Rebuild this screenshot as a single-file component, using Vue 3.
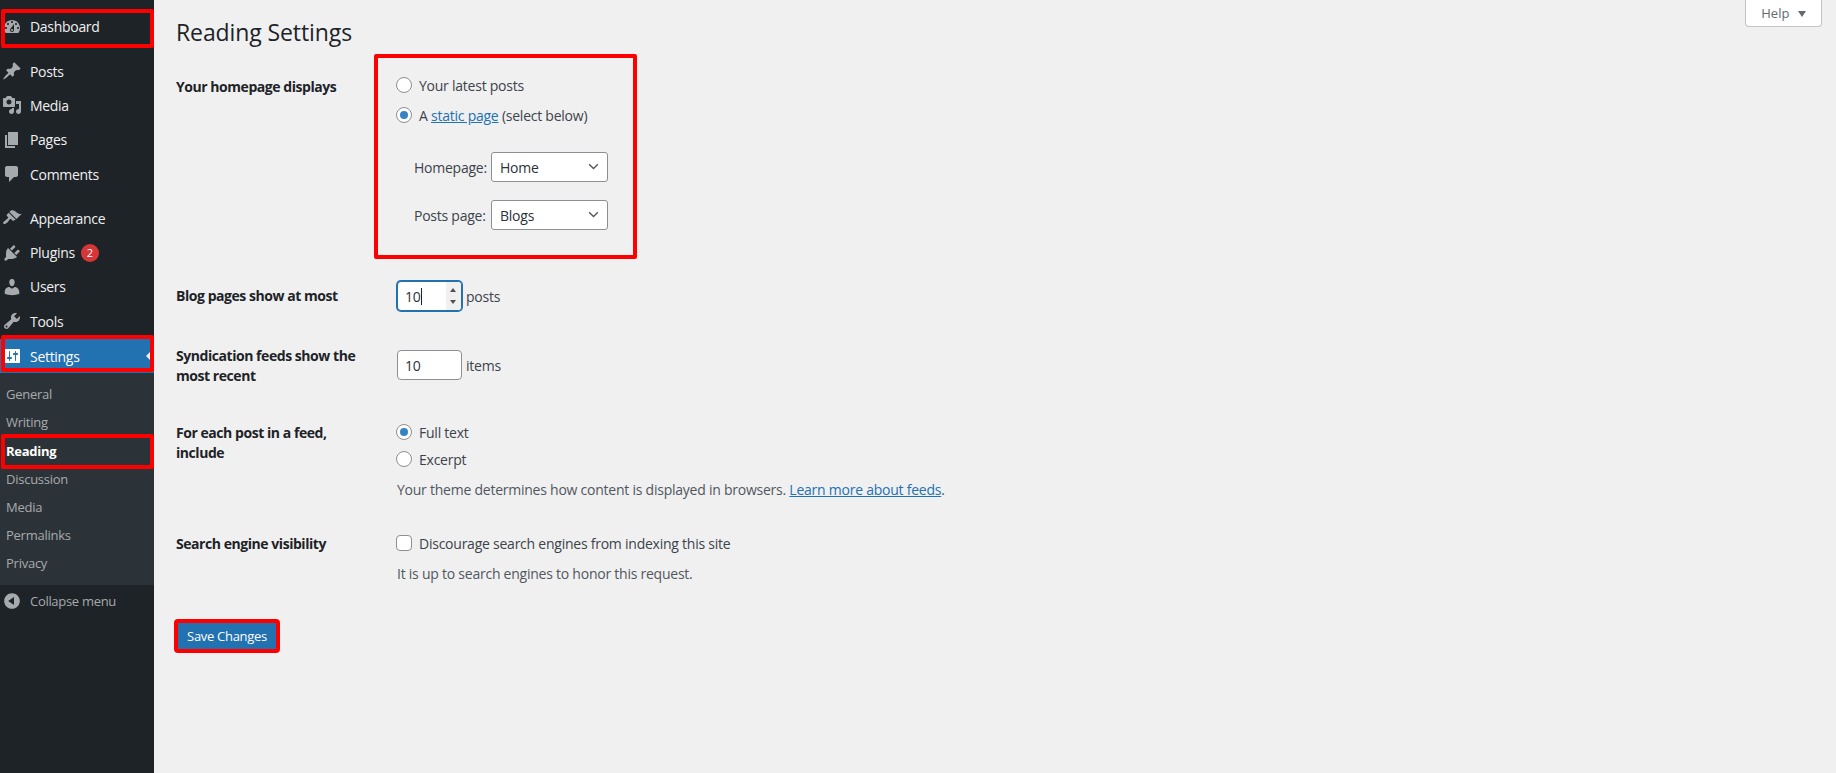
<script setup>
const icons = {
  dashboard: 'M3.76 16h12.48c1.1-1.37 1.76-3.11 1.76-5 0-4.42-3.58-8-8-8s-8 3.58-8 8c0 1.89.66 3.63 1.76 5zM10 4c.55 0 1 .45 1 1s-.45 1-1 1-1-.45-1-1 .45-1 1-1zM6 6c.55 0 1 .45 1 1s-.45 1-1 1-1-.45-1-1 .45-1 1-1zm8 0c.55 0 1 .45 1 1s-.45 1-1 1-1-.45-1-1 .45-1 1-1zm-5.37 5.55L12 7v6c0 1.1-.9 2-2 2s-2-.9-2-2c0-.57.24-1.08.63-1.45zM4 10c.55 0 1 .45 1 1s-.45 1-1 1-1-.45-1-1 .45-1 1-1zm12 0c.55 0 1 .45 1 1s-.45 1-1 1-1-.45-1-1 .45-1 1-1zm-5 3c0-.55-.45-1-1-1s-1 .45-1 1 .45 1 1 1 1-.45 1-1z',
  posts: 'M10.44 3.02l1.82-1.82 6.36 6.35-1.83 1.82c-1.05-.68-2.48-.57-3.41.36l-.75.75c-.92.93-1.04 2.35-.35 3.41l-1.83 1.82-2.41-2.41-2.8 2.79c-.42.42-3.38 2.71-3.8 2.29s1.86-3.39 2.28-3.81l2.79-2.79L4.1 9.36l1.83-1.82c1.05.69 2.48.57 3.4-.36l.75-.75c.93-.92 1.05-2.35.36-3.41z',
  media: 'M13 11V4c0-.55-.45-1-1-1h-1.67L9 1H5L3.67 3H2c-.55 0-1 .45-1 1v7c0 .55.45 1 1 1h10c.55 0 1-.45 1-1zM7 4.5c1.38 0 2.5 1.12 2.5 2.5S8.38 9.5 7 9.5 4.5 8.38 4.5 7 5.62 4.5 7 4.5zM14 6h5v10.5c0 1.38-1.12 2.5-2.5 2.5S14 17.88 14 16.5s1.12-2.5 2.5-2.5c.17 0 .34.02.5.05V9h-3V6zm-4 8.05V13h2v3.5c0 1.38-1.12 2.5-2.5 2.5S7 17.88 7 16.5 8.12 14 9.5 14c.17 0 .34.02.5.05z',
  pages: 'M6 15V2h10v13H6zm-1 1h8v2H3V5h2v11z',
  comments: 'M5 2h9c1.1 0 2 .9 2 2v7c0 1.1-.9 2-2 2h-2l-5 5v-5H5c-1.1 0-2-.9-2-2V4c0-1.1.9-2 2-2z',
  appearance: 'M14.48 11.06L7.41 3.99l1.5-1.5c.5-.56 2.3-.47 3.51.32 1.21.8 1.43 1.28 2.91 2.1 1.18.64 2.45 1.26 4.45.85zm-.71.71L6.7 4.7 4.93 6.47c-.39.39-.39 1.02 0 1.41l1.06 1.06c.39.39.39 1.03 0 1.42-.6.6-1.43 1.11-2.21 1.69-.35.26-.7.53-1.01.84C1.43 13.23.78 15.11 1.47 15.8c.69.7 2.57.05 3.91-1.21.31-.31.58-.66.84-1.01.58-.78 1.09-1.61 1.69-2.21.39-.39 1.02-.39 1.41 0l1.06 1.06c.39.39 1.02.39 1.41 0z',
  plugins: 'M13.11 4.36L9.87 7.6 8 5.73l3.24-3.24c.35-.34 1.05-.2 1.56.32.52.51.66 1.21.31 1.55zm-8 1.77l.91-1.12 9.01 9.01-1.19.84c-.71.71-2.63 1.16-3.82 1.16H6.14L4.9 17.26c-.59.59-1.54.59-2.12 0-.59-.58-.59-1.53 0-2.12l1.24-1.24v-3.88c0-1.13.4-3.19 1.09-3.89zm7.26 3.97l3.24-3.24c.34-.35 1.04-.21 1.55.31.52.51.66 1.21.31 1.55l-3.24 3.25z',
  users: 'M10 9.25c-2.27 0-2.73-3.44-2.73-3.44C7 4.02 7.82 2 9.97 2c2.16 0 2.98 2.02 2.71 3.81 0 0-.41 3.44-2.68 3.44zm0 2.57L12.72 10c2.39 0 4.52 2.33 4.52 4.53v2.49s-3.65 1.13-7.24 1.13c-3.65 0-7.24-1.13-7.24-1.13v-2.49c0-2.25 1.94-4.48 4.47-4.48z',
  tools: 'M16.68 9.77c-1.34 1.34-3.3 1.67-4.95.99l-5.41 6.52c-.99.99-2.59.99-3.58 0s-.99-2.59 0-3.57l6.52-5.42c-.68-1.65-.35-3.61.99-4.95 1.28-1.28 3.12-1.62 4.72-1.06l-2.89 2.89 2.82 2.82 2.86-2.87c.53 1.58.18 3.39-1.08 4.65zM3.81 16.21c.4.39 1.04.39 1.43 0 .4-.4.4-1.04 0-1.43-.39-.4-1.03-.4-1.43 0-.39.39-.39 1.03 0 1.43z',
  settings: 'M18 16V4c0-.55-.45-1-1-1H3c-.55 0-1 .45-1 1v12c0 .55.45 1 1 1h14c.55 0 1-.45 1-1zM8 11h1c.55 0 1 .45 1 1s-.45 1-1 1H8v1.5c0 .28-.22.5-.5.5s-.5-.22-.5-.5V13H6c-.55 0-1-.45-1-1s.45-1 1-1h1V5.5c0-.28.22-.5.5-.5s.5.22.5.5V11zm5-2h-1c-.55 0-1-.45-1-1s.45-1 1-1h1V5.5c0-.28.22-.5.5-.5s.5.22.5.5V7h1c.55 0 1 .45 1 1s-.45 1-1 1h-1v5.5c0 .28-.22.5-.5.5s-.5-.22-.5-.5V9z',
  collapse: 'M10 2.16c4.33 0 7.84 3.51 7.84 7.84s-3.51 7.84-7.84 7.84S2.16 14.33 2.16 10 5.71 2.16 10 2.16zm2 11.72V6.12L6.18 9.97z'
}
const groups = [
  [{ k: 'posts', t: 'Posts' }, { k: 'media', t: 'Media' }, { k: 'pages', t: 'Pages' }, { k: 'comments', t: 'Comments' }],
  [{ k: 'appearance', t: 'Appearance' }, { k: 'plugins', t: 'Plugins', badge: 2 }, { k: 'users', t: 'Users' }, { k: 'tools', t: 'Tools' }]
]
const subs = ['General', 'Writing', 'Reading', 'Discussion', 'Media', 'Permalinks', 'Privacy']
</script>

<template>
  <div class="page">
    <aside class="side">
      <div class="item dash">
        <svg class="ic" viewBox="0 0 20 20"><path fill-rule="evenodd" :d="icons.dashboard" /></svg>
        <span>Dashboard</span>
      </div>
      <div v-for="(g, i) in groups" :key="i" class="group">
        <div v-for="m in g" :key="m.k" class="item">
          <svg class="ic" viewBox="0 0 20 20"><path fill-rule="evenodd" :d="icons[m.k]" /></svg>
          <span>{{ m.t }}</span>
          <b v-if="m.badge" class="badge">{{ m.badge }}</b>
        </div>
      </div>
      <div class="item current">
        <svg class="ic white" viewBox="0 0 20 20"><path fill-rule="evenodd" :d="icons.settings" /></svg>
        <span>Settings</span>
        <i class="notch"></i>
      </div>
      <ul class="sub">
        <li v-for="s in subs" :key="s" :class="{ on: s === 'Reading' }">{{ s }}</li>
      </ul>
      <div class="collapse">
        <svg class="ic" viewBox="0 0 20 20"><path fill-rule="evenodd" :d="icons.collapse" /></svg>
        <span>Collapse menu</span>
      </div>
    </aside>

    <main class="main">
      <button class="help">Help <i class="tri"></i></button>
      <h1>Reading Settings</h1>

      <section class="row r-home">
        <div class="lab">Your homepage displays</div>
        <div class="homebox">
          <label class="opt"><i class="radio"></i>Your latest posts</label>
          <label class="opt"><i class="radio sel"></i><span>A <a>static page</a> (select below)</span></label>
          <div class="sels">
            <div class="selrow"><span class="sl">Homepage:</span><span class="select">Home<svg viewBox="0 0 12 8"><path d="M1 1.5 6 6.2l5-4.7" /></svg></span></div>
            <div class="selrow"><span class="sl">Posts page:</span><span class="select">Blogs<svg viewBox="0 0 12 8"><path d="M1 1.5 6 6.2l5-4.7" /></svg></span></div>
          </div>
        </div>
      </section>

      <section class="row r-blog">
        <div class="lab">Blog pages show at most</div>
        <div class="inl">
          <span class="num focus">10<i class="caret"></i><span class="spin"><i class="up"></i><i class="down"></i></span></span>
          <span>posts</span>
        </div>
      </section>

      <section class="row r-synd">
        <div class="lab">Syndication feeds show the most recent</div>
        <div class="inl">
          <span class="num">10</span>
          <span>items</span>
        </div>
      </section>

      <section class="row r-feed">
        <div class="lab">For each post in a feed, include</div>
        <div class="feedopts">
          <label class="opt o2"><i class="radio sel"></i>Full text</label>
          <label class="opt o2"><i class="radio"></i>Excerpt</label>
          <p class="desc d1">Your theme determines how content is displayed in browsers. <a>Learn more about feeds</a>.</p>
        </div>
      </section>

      <section class="row r-search">
        <div class="lab">Search engine visibility</div>
        <div class="searchopts">
          <label class="opt"><i class="check"></i>Discourage search engines from indexing this site</label>
          <p class="desc d2">It is up to search engines to honor this request.</p>
        </div>
      </section>

      <div class="savewrap"><button class="save">Save Changes</button></div>
    </main>
  </div>
</template>

<style>
html, body { margin: 0; background: #f0f0f1; }
</style>

<style scoped>
.page {
  display: flex;
  min-height: 773px;
  font-family: "Open Sans", "Noto Sans", sans-serif;
  font-size: 14px;
  letter-spacing: -0.24px;
  color: #3c434a;
  background: #f0f0f1;
  overflow: hidden;
}
.side {
  width: 154px;
  flex: none;
  background: #1d2327;
  color: #f0f0f1;
  padding-top: 9px;
  box-sizing: border-box;
  letter-spacing: -0.3px;
}
.item {
  position: relative;
  height: 34.3px;
  display: flex;
  align-items: center;
  padding-left: 30px;
}
.dash { height: 35px; margin-bottom: 10px; }
.dash::after {
  content: "";
  position: absolute;
  left: 1px;
  right: 0;
  top: 0;
  bottom: -4px;
  border: 4px solid #f00;
  border-radius: 2px;
  pointer-events: none;
}
.group { margin-bottom: 10px; }
.group:nth-of-type(3) { margin-bottom: 1px; }
.ic {
  position: absolute;
  left: 2px;
  top: 50%;
  margin-top: -10px;
  width: 20px;
  height: 20px;
  fill: #a7aaad;
}
.ic.white { fill: #fff; }
.badge {
  margin-left: 6px;
  width: 18px;
  height: 18px;
  border-radius: 50%;
  background: #d63638;
  color: #fff;
  font-size: 11px;
  font-weight: 400;
  display: flex;
  align-items: center;
  justify-content: center;
}
.current { background: #2271b1; color: #fff; height: 34px; }
.current::after {
  content: "";
  position: absolute;
  left: 1px;
  right: 0;
  top: -4px;
  bottom: 1px;
  border: 4px solid #f00;
  border-radius: 2px;
  pointer-events: none;
}
.notch {
  position: absolute;
  right: 4px;
  top: 13px;
  border: 4px solid transparent;
  border-right-color: #f0f0f1;
  border-left-width: 0;
}
.sub {
  list-style: none;
  margin: 0;
  padding: 7px 0 8px;
  background: #2c3338;
  color: #a7aaad;
  font-size: 13px;
  letter-spacing: -0.25px;
}
.sub li { height: 28.1px; line-height: 28px; padding-left: 6px; position: relative; }
.sub li.on { color: #fff; font-weight: 700; }
.sub li.on::after {
  content: "";
  position: absolute;
  left: 1px;
  right: 0;
  top: -3px;
  bottom: -4px;
  border: 4px solid #f00;
  border-radius: 2px;
  pointer-events: none;
}
.collapse {
  position: relative;
  height: 31px;
  display: flex;
  align-items: center;
  padding-left: 30px;
  color: #a7aaad;
  font-size: 13px;
}
.main {
  position: relative;
  flex: 1;
  padding-left: 22px;
  min-width: 0;
}
.help {
  position: absolute;
  right: 14px;
  top: -1px;
  width: 77px;
  height: 28px;
  border: 1px solid #c3c4c7;
  border-top: 0;
  border-radius: 0 0 4px 4px;
  background: #fff;
  color: #646970;
  font: inherit;
  font-size: 13px;
  padding: 0;
}
.tri {
  display: inline-block;
  margin-left: 5px;
  border-style: solid;
  border-width: 6px 4px 0;
  border-color: #646970 transparent transparent;
  vertical-align: 1px;
}
h1 {
  margin: 0;
  padding-top: 18px;
  height: 37px;
  font-size: 23px;
  line-height: 29px;
  font-weight: 400;
  color: #1d2327;
  letter-spacing: -0.1px;
}
.row {
  display: grid;
  grid-template-columns: 221px 1fr;
  box-sizing: border-box;
}
.lab {
  font-weight: 700;
  color: #1d2327;
  line-height: 20px;
  width: 190px;
  letter-spacing: -0.45px;
}
.r-home { margin-top: 21px; height: 205px; position: relative; }
.r-home .lab { padding-top: 1px; }
.homebox {
  position: relative;
  margin-top: -1px;
}
.homebox::after {
  content: "";
  position: absolute;
  left: -23px;
  top: -21px;
  width: 263px;
  height: 205px;
  box-sizing: border-box;
  border: 4px solid #f00;
  border-radius: 2px;
  pointer-events: none;
}
.opt {
  display: flex;
  align-items: center;
  height: 20px;
  margin-bottom: 10px;
}
.o2 { margin-bottom: 7px; }
.radio, .check {
  flex: none;
  box-sizing: border-box;
  width: 16px;
  height: 16px;
  margin-left: -1px;
  margin-right: 7px;
  border: 1px solid #8c8f94;
  background: #fff;
  border-radius: 50%;
  position: relative;
}
.check { border-radius: 4px; }
.radio.sel::after {
  content: "";
  position: absolute;
  left: 3px;
  top: 3px;
  width: 8px;
  height: 8px;
  border-radius: 50%;
  background: #3582c4;
}
a { color: #2271b1; text-decoration: underline; }
.sels { padding: 17px 0 0 17px; }
.selrow {
  display: flex;
  align-items: center;
  height: 30px;
  margin-bottom: 18px;
}
.sl { width: 78px; }
.select {
  position: relative;
  box-sizing: border-box;
  width: 117px;
  height: 30px;
  margin-left: -1px;
  padding-left: 8px;
  display: flex;
  align-items: center;
  border: 1px solid #8c8f94;
  border-radius: 3px;
  background: #fff;
  color: #2c3338;
}
.select svg {
  position: absolute;
  right: 8px;
  top: 10px;
  width: 11px;
  height: 7px;
  fill: none;
  stroke: #50575e;
  stroke-width: 1.6;
}
.inl { display: flex; align-items: center; gap: 4px; height: 30px; }
.r-blog { height: 60px; }
.r-blog .lab, .r-synd .lab { padding-top: 5px; }
.r-synd { height: 82px; }
.r-synd .inl { margin-top: 9px; }
.num {
  position: relative;
  box-sizing: border-box;
  width: 65px;
  height: 30px;
  padding-left: 7px;
  display: flex;
  align-items: center;
  border: 1px solid #8c8f94;
  border-radius: 4px;
  background: #fff;
  color: #2c3338;
}
.num.focus {
  border-color: #2271b1;
  box-shadow: 0 0 0 1px #2271b1;
}
.caret { width: 1px; height: 17px; background: #1d2327; }
.spin {
  position: absolute;
  right: 0;
  top: 0;
  bottom: 0;
  width: 15px;
  background: #f0f0f0;
  border-radius: 0 3px 3px 0;
}
.up, .down {
  position: absolute;
  left: 4px;
  border-style: solid;
  border-color: transparent;
}
.up { top: 6px; border-width: 0 3.5px 4px; border-bottom-color: #505050; }
.down { bottom: 6px; border-width: 4px 3.5px 0; border-top-color: #505050; }
.r-feed { height: 111px; }
.feedopts { margin-top: -1px; }
.desc { margin: 0; color: #50575e; }
.d1 { margin-top: 11px; line-height: 20px; }
.d2 { margin-top: 11px; line-height: 20px; }
.searchopts { margin-top: -1px; }
.r-search { height: 85px; }
.save {
  position: relative;
  display: block;
  box-sizing: content-box;
  width: 98px;
  height: 26px;
  padding: 0;
  border: 4px solid #f00;
  background: #2271b1;
  background-clip: padding-box;
  color: #fff;
  font: inherit;
  font-size: 13px;
  letter-spacing: -0.3px;
  border-radius: 4px;
  margin-left: -2px;
}
</style>
